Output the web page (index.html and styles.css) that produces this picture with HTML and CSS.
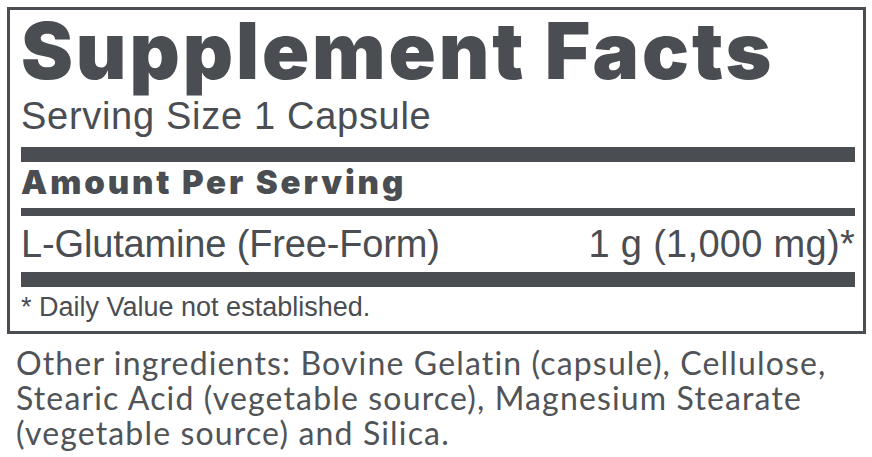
FILE: index.html
```html
<!DOCTYPE html>
<html>
<head>
<meta charset="utf-8">
<link rel="stylesheet" href="styles.css">
</head>
<body>
<div class="facts">
  <h1 class="title">Supplement Facts</h1>
  <div class="serving">Serving Size 1 Capsule</div>
  <div class="bar thick first"></div>
  <div class="amount">Amount Per Serving</div>
  <div class="bar thin"></div>
  <div class="row"><span class="name">L-Glutamine (Free-Form)</span><span class="qty">1 g (1,000 mg)*</span></div>
  <div class="bar thick last"></div>
  <div class="note">* Daily Value not established.</div>
</div>
<p class="other">Other ingredients: Bovine Gelatin (capsule), Cellulose,<br>Stearic Acid (vegetable source), Magnesium Stearate<br>(vegetable source) and Silica.</p>
</body>
</html>
```
FILE: styles.css
```css
html, body {
  margin: 0;
  padding: 0;
  background: #ffffff;
}
body {
  width: 872px;
  height: 457px;
  overflow: hidden;
  color: #4a4d52;
  font-family: "Liberation Sans", Arial, sans-serif;
}
.facts {
  margin: 7px 6px 0 7px;
  width: 859px;
  height: 327px;
  border: 3px solid #4a4d52;
  padding: 2px 8px 0 11px;
  box-sizing: border-box;
  display: flex;
  flex-direction: column;
}
.title {
  margin: 0;
  font-family: Inter, Roboto, "Liberation Sans", sans-serif;
  font-weight: 900;
  font-size: 78px;
  line-height: 78px;
  letter-spacing: 2.9px;
  white-space: nowrap;
}
.serving {
  margin-top: 6px;
  font-size: 38px;
  line-height: 40px;
  letter-spacing: 0.7px;
}
.bar {
  background: #4a4d52;
}
.bar.thick {
  height: 15px;
}
.bar.first {
  margin-top: 11px;
}
.amount {
  font-family: Inter, Roboto, "Liberation Sans", sans-serif;
  font-weight: 900;
  font-size: 33px;
  line-height: 40px;
  letter-spacing: 2.9px;
  white-space: nowrap;
}
.bar.thin {
  height: 8px;
  margin-top: 6px;
}
.row {
  margin-top: 8px;
  display: flex;
  justify-content: space-between;
  font-size: 38px;
  line-height: 40px;
}
.name {
  letter-spacing: -0.15px;
}
.qty {
  letter-spacing: 0.3px;
}
.bar.last {
  margin-top: 8px;
}
.note {
  margin-top: 6px;
  font-size: 27px;
  line-height: 28px;
}
.other {
  margin: 11px 0 0 16px;
  font-family: Lato, sans-serif;
  font-size: 32px;
  line-height: 35px;
  letter-spacing: 1.15px;
  color: #505357;
  white-space: nowrap;
}
```
